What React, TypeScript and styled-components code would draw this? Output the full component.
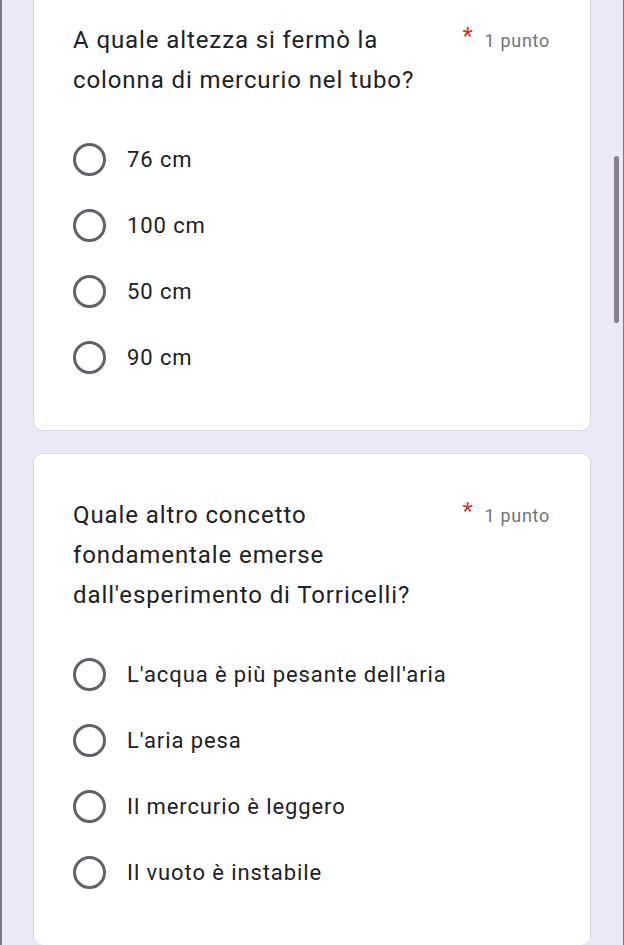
import React from "react";
import styled, { createGlobalStyle } from "styled-components";

const TEXT = "#202124";
const MUTED = "#70757a";
const RED = "#d93025";
const BG = "#ece8f7";

const GlobalStyle = createGlobalStyle`
  html, body {
    margin: 0;
    padding: 0;
    background: ${BG};
    overflow: hidden;
  }
  body {
    font-family: Roboto, "Noto Sans", Arial, sans-serif;
  }
`;

const Page = styled.div`
  position: relative;
  height: 945px;
  overflow: hidden;
  background: ${BG};
  border-left: 2px solid #7b7a85;
  border-right: 1px solid #7b7a85;
  box-sizing: border-box;
`;

const List = styled.div`
  display: flex;
  flex-direction: column;
  gap: 22px;
  margin-top: -22px;
  padding: 0 32px 0 31px;
`;

const Card = styled.section`
  background: #fff;
  border: 1px solid #dadce0;
  border-radius: 10px;
  padding: 41px 40px 40px 39px;
`;

const Header = styled.div`
  display: flex;
  align-items: flex-start;
  justify-content: space-between;
`;

const Title = styled.div`
  font-size: 24px;
  line-height: 40px;
  letter-spacing: 0.9px;
  color: ${TEXT};
`;

const Points = styled.div`
  display: flex;
  align-items: center;
  gap: 11px;
  height: 40px;
  font-size: 18px;
  letter-spacing: 0.7px;
  color: ${MUTED};
`;

const Star = styled.span`
  color: ${RED};
  font-size: 24px;
  position: relative;
  top: -4px;
`;

const Options = styled.div`
  display: flex;
  flex-direction: column;
  margin-top: 26px;
`;

const Option = styled.label`
  display: flex;
  align-items: center;
  gap: 21px;
  height: 66px;
  font-size: 22px;
  letter-spacing: 0.9px;
  color: ${TEXT};
`;

const Radio = styled.span`
  width: 33px;
  height: 33px;
  box-sizing: border-box;
  border: 3px solid #5f6368;
  border-radius: 50%;
  flex-shrink: 0;
`;

const Scrollbar = styled.div`
  position: absolute;
  left: 612px;
  top: 156px;
  width: 5px;
  height: 167px;
  border-radius: 3px;
  background: #85808c;
`;

type Question = {
  lines: string[];
  options: string[];
};

const questions: Question[] = [
  {
    lines: ["A quale altezza si fermò la", "colonna di mercurio nel tubo?"],
    options: ["76 cm", "100 cm", "50 cm", "90 cm"],
  },
  {
    lines: [
      "Quale altro concetto",
      "fondamentale emerse",
      "dall'esperimento di Torricelli?",
    ],
    options: [
      "L'acqua è più pesante dell'aria",
      "L'aria pesa",
      "Il mercurio è leggero",
      "Il vuoto è instabile",
    ],
  },
];

const App = () => {
  return (
    <Page>
      <GlobalStyle />
      <List>
        {questions.map((q, i) => (
          <Card key={i}>
            <Header>
              <Title>
                {q.lines.map((l, j) => (
                  <div key={j}>{l}</div>
                ))}
              </Title>
              <Points>
                <Star>*</Star>
                <span>1 punto</span>
              </Points>
            </Header>
            <Options>
              {q.options.map((o) => (
                <Option key={o}>
                  <Radio />
                  <span>{o}</span>
                </Option>
              ))}
            </Options>
          </Card>
        ))}
      </List>
      <Scrollbar />
    </Page>
  );
};

export default App;
